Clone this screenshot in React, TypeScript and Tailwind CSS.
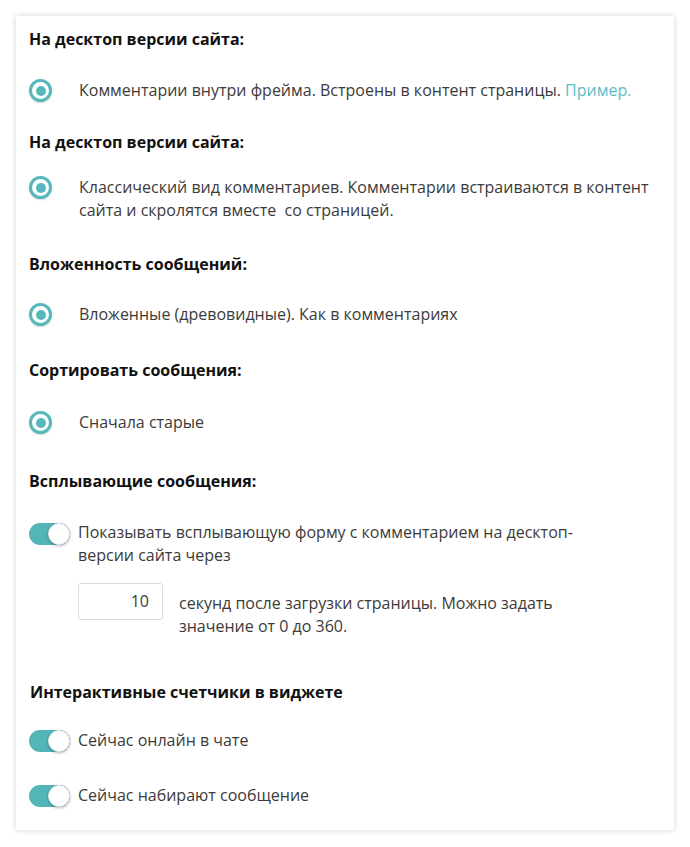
import React from 'react';

const Radio: React.FC = () => (
  <span className="flex h-[23px] w-[23px] shrink-0 items-center justify-center rounded-full border-[3px] border-[#55b8bb] bg-white shadow-[0_1px_2px_rgba(0,0,0,0.15)]">
    <span className="h-[10px] w-[10px] rounded-full bg-[#55b8bb]" />
  </span>
);

const Toggle: React.FC = () => (
  <span className="relative flex h-[22px] w-[41px] shrink-0 items-center rounded-full bg-[#52b6b7]">
    <span className="absolute right-0 top-0 h-[22px] w-[22px] rounded-full border border-[#e8e8e8] bg-white shadow-[0_1px_3px_rgba(0,0,0,0.3)]" />
  </span>
);

const Heading: React.FC<{ children: React.ReactNode; className?: string }> = ({ children, className }) => (
  <h3 className={`text-[16px] font-bold leading-[22px] text-[#111] ${className ?? ''}`}>{children}</h3>
);

export default function App() {
  return (
    <div className="min-h-[847px] bg-white p-4" style={{ fontFamily: '"Open Sans", "Noto Sans", sans-serif' }}>
      <div className="h-[814px] w-[658px] bg-white px-[13px] pt-[12px] text-[16px] leading-[23px] text-[#3d3a3a] shadow-[0_0_6px_rgba(0,0,0,0.18)]">
        <Heading>На десктоп версии сайта:</Heading>
        <div className="mt-[29px] flex items-center gap-[27px]">
          <Radio />
          <p>
            Комментарии внутри фрейма. Встроены в контент страницы.{' '}
            <span className="text-[#5bbcc6]">Пример.</span>
          </p>
        </div>

        <Heading className="mt-[29px]">На десктоп версии сайта:</Heading>
        <div className="mt-[23px] flex items-start gap-[27px]">
          <Radio />
          <p>
            Классический вид комментариев. Комментарии встраиваются в контент сайта и скролятся вместе&nbsp; со страницей.
          </p>
        </div>

        <Heading className="mt-[31px]">Вложенность сообщений:</Heading>
        <div className="mt-[28px] flex items-center gap-[27px]">
          <Radio />
          <p>Вложенные (древовидные). Как в комментариях</p>
        </div>

        <Heading className="mt-[33px]">Сортировать сообщения:</Heading>
        <div className="mt-[30px] flex items-center gap-[27px]">
          <Radio />
          <p>Сначала старые</p>
        </div>

        <Heading className="mt-[36px]">Всплывающие сообщения:</Heading>
        <div className="mt-[30px] flex items-start gap-[8px]">
          <span className="pt-[1px]">
            <Toggle />
          </span>
          <div className="-mt-[1px]">
            <p className="w-[520px]">Показывать всплывающую форму с комментарием на десктоп-версии сайта через</p>
            <div className="mt-[16px] flex items-start gap-[16px]">
              <div className="flex h-[37px] w-[85px] shrink-0 items-center justify-end rounded-[3px] border border-[#dcdcdc] bg-white pr-[13px]">
                10
              </div>
              <p className="mt-[9px] w-[400px]">
                секунд после загрузки страницы. Можно задать значение от 0 до 360.
              </p>
            </div>
          </div>
        </div>

        <Heading className="ml-[1px] mt-[43px]">Интерактивные счетчики в виджете</Heading>
        <div className="mt-[26px] flex items-center gap-[8px]">
          <Toggle />
          <p>Сейчас онлайн в чате</p>
        </div>
        <div className="mt-[32px] flex items-center gap-[8px]">
          <Toggle />
          <p>Сейчас набирают сообщение</p>
        </div>
      </div>
    </div>
  );
}
